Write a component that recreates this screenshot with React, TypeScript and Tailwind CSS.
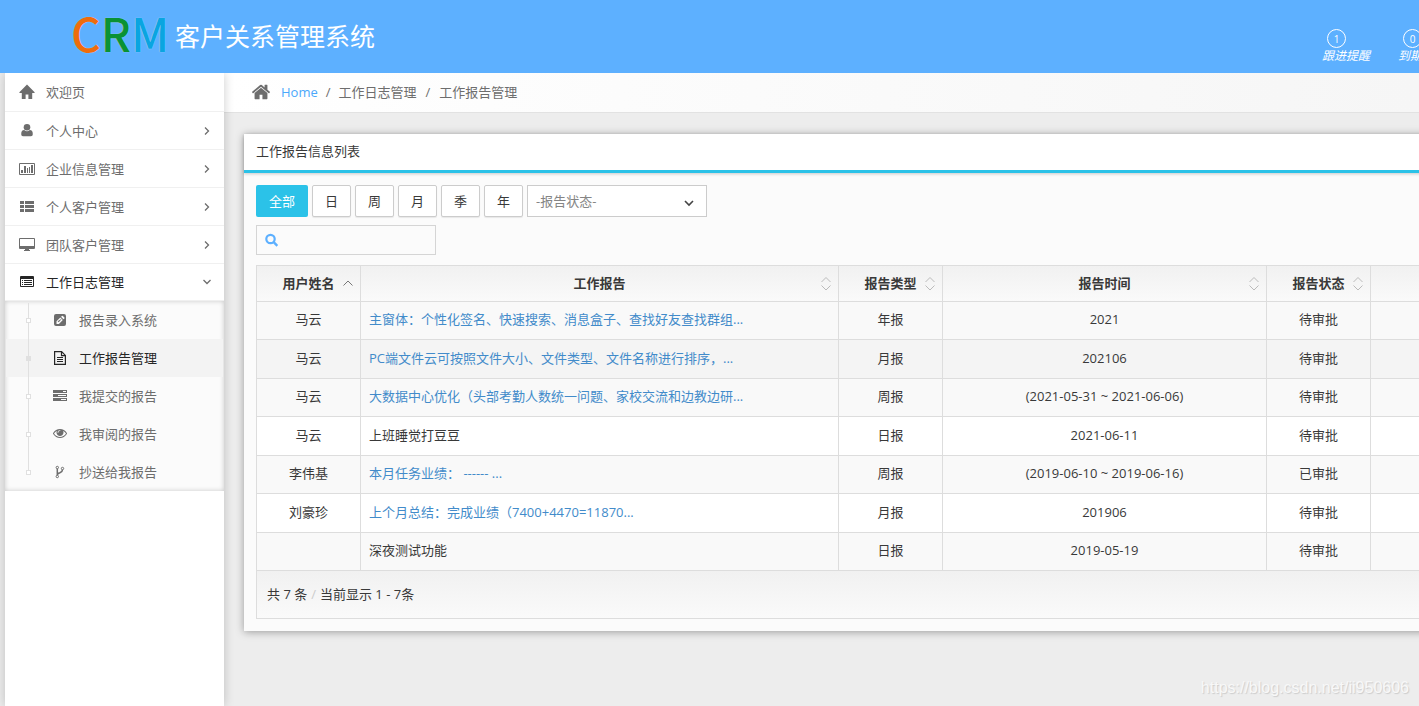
import type { ReactNode } from "react";

type IconProps = { className?: string };

function Glyph({ box, className, children }: { box: string; className?: string; children: ReactNode }) {
  return (
    <svg viewBox={box} fill="currentColor" aria-hidden="true" className={className}>
      {children}
    </svg>
  );
}

const HomeSolid = ({ className = "w-4 h-4" }: IconProps) => (
  <Glyph box="0 0 16 16" className={className}>
    <path d="M8 0.6 L15.6 8.2 V9 H13.2 V15 H9.4 V10.4 H6.6 V15 H2.8 V9 H0.4 V8.2 Z" />
  </Glyph>
);
const HomeRoof = ({ className = "w-5 h-5" }: IconProps) => (
  <Glyph box="0 0 1792 1792" className={className}>
    <path d="M1472 992v480q0 26-19 45t-45 19h-384v-384h-256v384h-384q-26 0-45-19t-19-45v-480q0-1 .5-3t.5-3l575-474 575 474q1 2 1 6zm223-69l-62 74q-8 9-21 11h-3q-13 0-21-7l-692-577-692 577q-12 8-24 7-13-2-21-11l-62-74q-8-10-7-23.5t11-21.5l719-599q32-26 76-26t76 26l244 204v-195q0-14 9-23t23-9h192q14 0 23 9t9 23v408l219 182q10 8 11 21.5t-7 23.5z" />
  </Glyph>
);
const UserIcon = () => (
  <Glyph box="0 0 16 16" className="w-4 h-4">
    <circle cx="8" cy="4.2" r="3.3" />
    <path d="M2.2 11.2 Q2.2 7 5.2 7 Q8 9.4 10.8 7 Q13.8 7 13.8 11.2 Q13.8 13.2 12 13.2 H4 Q2.2 13.2 2.2 11.2Z" />
  </Glyph>
);
const ChartIcon = () => (
  <Glyph box="0 0 16 16" className="w-4 h-4">
    <path fillRule="evenodd" d="M1 2h14a1 1 0 0 1 1 1v10a1 1 0 0 1-1 1H1a1 1 0 0 1-1-1V3a1 1 0 0 1 1-1zM1 3v10h14V3z" />
    <path d="M2 9h2v3H2zM5 5h2v7H5zM8 7h1v5H8zM10 6h1v6h-1zM12 4h2v8h-2z" />
  </Glyph>
);
const ListIcon = () => (
  <Glyph box="0 0 16 16" className="w-4 h-4">
    <path d="M1 2h4v3H1zM6 2h9v3H6zM1 6h4v3H1zM6 6h9v3H6zM1 10h4v3H1zM6 10h9v3H6z" />
  </Glyph>
);
const DesktopIcon = () => (
  <Glyph box="0 0 16 16" className="w-4 h-4">
    <path fillRule="evenodd" d="M1 1h14a1 1 0 0 1 1 1v9a1 1 0 0 1-1 1h-5v1h1v1H5v-1h1v-1H1a1 1 0 0 1-1-1V2a1 1 0 0 1 1-1zM1 2v7h14V2z" />
  </Glyph>
);
const ListAltIcon = () => (
  <Glyph box="0 0 16 16" className="w-4 h-4">
    <path fillRule="evenodd" d="M2 2h12a1 1 0 0 1 1 1v9a1 1 0 0 1-1 1H2a1 1 0 0 1-1-1V3a1 1 0 0 1 1-1zM2 5v7h12V5z" />
    <path d="M3 6h1v1H3zM5 6h8v1H5zM3 8h1v1H3zM5 8h8v1H5zM3 10h1v1H3zM5 10h8v1H5z" />
  </Glyph>
);
const PencilSquareIcon = () => (
  <Glyph box="0 0 14 14" className="w-[14px] h-[14px]">
    <path fillRule="evenodd" d="M3 1h8a2 2 0 0 1 2 2v8a2 2 0 0 1-2 2H3a2 2 0 0 1-2-2V3a2 2 0 0 1 2-2zM3.500 8.300V11h2.400l3.900-4-2.500-2.500zM8 3.800l2.500 2.500.9-.9q.4-.4 0-.9L9.900 2.900q-.4-.4-.9 0z" />
    <path d="M4.700 8.200l1 1 2.800-2.900-.4-.4z" />
  </Glyph>
);
const FileIcon = () => (
  <svg viewBox="0 0 14 14" fill="none" stroke="currentColor" strokeWidth="1.200" aria-hidden="true" className="w-[14px] h-[14px]">
    <path d="M1.600.600h7l3.800 3.800v9H1.600zM8.500.600v4h4M4 6.500h6M4 8.500h6M4 10.500h6" />
  </svg>
);
const TasksIcon = () => (
  <Glyph box="0 0 14 14" className="w-[14px] h-[14px]">
    <path fillRule="evenodd" d="M0 1h14v3H0zM10 2v1h3V2zM0 5h14v3H0zM5 6v1h8V6zM0 9h14v3H0zM8 10v1h5v-1z" />
  </Glyph>
);
const EyeIcon = () => (
  <Glyph box="0 128 1792 1792" className="w-[14px] h-[14px]">
    <path d="M1664 960q-152-236-381-353 61 104 61 225 0 185-131.500 316.500t-316.500 131.500-316.500-131.500-131.500-316.500q0-121 61-225-229 117-381 353 133 205 333.500 326.500t434.500 121.500 434.500-121.500 333.500-326.500zm-720-384q0-20-14-34t-34-14q-125 0-214.500 89.500t-89.500 214.500q0 20 14 34t34 14 34-14 14-34q0-86 61-147t147-61q20 0 34-14t14-34zm848 384q0 34-20 69-140 230-376.500 368.500t-499.500 138.500-499.500-139-376.500-368q-20-35-20-69t20-69q140-229 376.500-368t499.500-139 499.500 139 376.500 368q20 35 20 69z" />
  </Glyph>
);
const ForkIcon = () => (
  <svg viewBox="0 0 14 14" fill="none" stroke="currentColor" aria-hidden="true" className="w-[14px] h-[14px]">
    <path strokeWidth="1" d="M5.500 2.500a1.200 1.200 0 1 1-2.400 0a1.200 1.200 0 1 1 2.400 0M5.500 11.500a1.200 1.200 0 1 1-2.400 0a1.200 1.200 0 1 1 2.400 0M10.700 3.500a1.200 1.200 0 1 1-2.400 0a1.200 1.200 0 1 1 2.400 0" />
    <path strokeWidth="1.500" d="M4.300 3.700v6.600M9.500 4.700q0 2-2.600 3-2.600.8-2.600 2.600" />
  </svg>
);
const SearchIcon = () => (
  <svg viewBox="0 0 14 14" fill="none" stroke="currentColor" strokeWidth="2.200" aria-hidden="true" className="w-[14px] h-[14px]">
    <circle cx="5.500" cy="6" r="4.200" />
    <path d="M8.700 9.200l3.600 3.600" strokeWidth="2.400" />
  </svg>
);
const Chevron = ({ className = "" }: IconProps) => (
  <svg viewBox="0 0 10 10" fill="none" stroke="currentColor" strokeWidth="1.300" aria-hidden="true" className={className}>
    <path d="M3 1.500L6.500 5L3 8.500" />
  </svg>
);

const menu = [
  { label: "欢迎页", icon: <HomeSolid />, height: "h-[39px]" },
  { label: "个人中心", icon: <UserIcon />, height: "h-[38px]", expandable: true },
  { label: "企业信息管理", icon: <ChartIcon />, height: "h-[38px]", expandable: true },
  { label: "个人客户管理", icon: <ListIcon />, height: "h-[38px]", expandable: true },
  { label: "团队客户管理", icon: <DesktopIcon />, height: "h-[38px]", expandable: true },
  { label: "工作日志管理", icon: <ListAltIcon />, height: "h-[37px]", expandable: true, open: true },
];

const submenu = [
  { label: "报告录入系统", icon: <PencilSquareIcon /> },
  { label: "工作报告管理", icon: <FileIcon />, active: true },
  { label: "我提交的报告", icon: <TasksIcon /> },
  { label: "我审阅的报告", icon: <EyeIcon /> },
  { label: "抄送给我报告", icon: <ForkIcon /> },
];

const columns = [
  { label: "用户姓名", sort: "asc", width: "w-[104px]" },
  { label: "工作报告", sort: "both", width: "w-[478px]" },
  { label: "报告类型", sort: "both", width: "w-[104px]" },
  { label: "报告时间", sort: "both", width: "w-[324px]" },
  { label: "报告状态", sort: "both", width: "w-[104px]" },
  { label: "", sort: "", width: "" },
];

const rows = [
  { user: "马云", report: "主窗体：个性化签名、快速搜索、消息盒子、查找好友查找群组...", link: true, type: "年报", time: "2021", status: "待审批", bg: "bg-[#f9f9f9]" },
  { user: "马云", report: "PC端文件云可按照文件大小、文件类型、文件名称进行排序，...", link: true, type: "月报", time: "202106", status: "待审批", bg: "bg-[#f4f4f4]" },
  { user: "马云", report: "大数据中心优化（头部考勤人数统一问题、家校交流和边教边研...", link: true, type: "周报", time: "(2021-05-31 ~ 2021-06-06)", status: "待审批", bg: "bg-[#f9f9f9]" },
  { user: "马云", report: "上班睡觉打豆豆", link: false, type: "日报", time: "2021-06-11", status: "待审批", bg: "bg-white" },
  { user: "李伟基", report: "本月任务业绩： ------ ...", link: true, type: "周报", time: "(2019-06-10 ~ 2019-06-16)", status: "已审批", bg: "bg-[#f9f9f9]" },
  { user: "刘豪珍", report: "上个月总结：完成业绩（7400+4470=11870...", link: true, type: "月报", time: "201906", status: "待审批", bg: "bg-white" },
  { user: "", report: "深夜测试功能", link: false, type: "日报", time: "2019-05-19", status: "待审批", bg: "bg-[#f9f9f9]" },
];

function Header() {
  return (
    <header className="z-20 flex h-[73px] shrink-0 overflow-hidden bg-[#5db0ff] text-white">
      <div className="flex items-start pl-[71px]">
        <div className="flex font-['Noto_Sans_CJK_SC',sans-serif] text-[46px] leading-[64px] font-medium [text-shadow:0_0_1px_#ffffffaa]">
          <span className="text-[#ee6c0c]">C</span>
          <span className="text-[#0a9235]">R</span>
          <span className="text-[#0aa5e0]">M</span>
        </div>
        <h1 className="pl-1.5 text-[25px] leading-[72px] whitespace-nowrap">客户关系管理系统</h1>
      </div>
      <nav className="ml-auto flex w-[97px] shrink-0 pt-[29px]">
        {[
          ["1", "跟进提醒"],
          ["0", "到期提醒"],
        ].map(([count, label]) => (
          <a key={label} href="#" className="flex w-[76px] shrink-0 flex-col text-xs leading-4 italic">
            <span className="ml-[5px] flex size-[19px] items-center justify-center rounded-full border border-white text-[10px] leading-3 not-italic">{count}</span>
            <span className="whitespace-nowrap">{label}</span>
          </a>
        ))}
      </nav>
    </header>
  );
}

function Sidebar() {
  return (
    <aside className="z-10 ml-[5px] w-[219px] shrink-0 bg-white text-[#6d6d6d] shadow-[0_0_10px_rgba(0,0,0,0.2)]">
      <ul>
        {menu.map((item) => (
          <li key={item.label}>
            <a
              href="#"
              className={`flex items-center border-b border-[#f0f0f0] pr-3 pl-[14px] ${item.height} ${item.open ? "text-[#262626]" : ""}`}
            >
              {item.icon}
              <span className="ml-[11px] flex-1">{item.label}</span>
              {item.expandable && <Chevron className={`size-[10px] text-[#6d6d6d] ${item.open ? "rotate-90" : ""}`} />}
            </a>
          </li>
        ))}
      </ul>
      <ul className="relative bg-[#fbfbfb] shadow-[inset_0_0_5px_rgba(0,0,0,0.2)]">
        <li aria-hidden="true" className="absolute top-0.5 bottom-5 left-[23px] border-l border-[#e0e0e0]" />
        {submenu.map((item) => (
          <li key={item.label} className="px-px">
            <a
              href="#"
              className={`flex h-[38px] items-center pl-5 ${item.active ? "bg-[#f3f3f3] text-[#262626]" : ""}`}
            >
              <span className={`z-10 mr-[22px] size-[5px] border border-[#e0e0e0] ${item.active ? "bg-[#e0e0e0]" : "bg-white"}`} />
              {item.icon}
              <span className="ml-3">{item.label}</span>
            </a>
          </li>
        ))}
      </ul>
    </aside>
  );
}

function SortMark({ kind }: { kind: string }) {
  if (!kind) return null;
  return (
    <svg viewBox="0 0 10 16" fill="none" stroke={kind === "asc" ? "#777" : "#bbb"} aria-hidden="true" className="absolute top-[10px] right-[7px] h-4 w-[10px]">
      <path d={kind === "asc" ? "M.5 9.500L5 5L9.500 9.500" : "M.5 6L5 1.500L9.500 6M.5 9.500L5 14L9.500 9.500"} />
    </svg>
  );
}

function ReportTable() {
  return (
    <table className="w-full table-fixed border-separate border-spacing-0 border-t border-l border-[#ddd]">
      <thead>
        <tr>
          {columns.map((c, i) => (
            <th key={i} className={`relative h-9 border-r border-b border-[#ddd] bg-linear-to-b from-[#f1f1f1] to-[#fafafa] p-0 pb-px font-bold ${c.width}`}>
              {c.label}
              <SortMark kind={c.sort} />
            </th>
          ))}
        </tr>
      </thead>
      <tbody className="text-center [&_td]:border-r [&_td]:border-b [&_td]:border-[#ddd] [&_td]:p-0 [&_td]:pb-[3px]">
        {rows.map((r, i) => (
          <tr key={i} className={`h-[38px] even:h-[39px] ${r.bg}`}>
            <td>{r.user}</td>
            <td className="text-left">
              <div className="overflow-hidden pl-2 whitespace-nowrap">
                {r.link ? <a href="#" className="text-[#428bca]">{r.report}</a> : r.report}
              </div>
            </td>
            <td>{r.type}</td>
            <td>{r.time}</td>
            <td>{r.status}</td>
            <td />
          </tr>
        ))}
      </tbody>
    </table>
  );
}

export default function App() {
  return (
    <div className="relative flex min-h-screen flex-col overflow-hidden bg-[#ededed] font-['Open_Sans','Noto_Sans_CJK_SC',sans-serif] text-[13px] leading-5 text-[#393939]">
      <Header />
      <div className="flex flex-1">
        <Sidebar />
        <main className="min-w-0 flex-1">
          <nav className="flex h-10 items-center border-b border-[#e2e2e2] bg-linear-to-r from-white to-[#f6f6f6] pb-[2px] pl-[27px] text-[#6d6d6d]">
            <HomeRoof />
            <a href="#" className="ml-[10px] text-[#4ba8fb]">Home</a>
            <span className="mx-2">/</span>
            <span>工作日志管理</span>
            <span className="mx-[9px]">/</span>
            <span>工作报告管理</span>
          </nav>
          <section className="mt-[21px] mr-[-40px] ml-5 bg-[#fbfbfb] shadow-[0_1px_8px_rgba(0,0,0,0.35)]">
            <h2 className="h-[39px] border-b-3 border-[#2bc2e8] bg-white pl-3 leading-[35px] shadow-[0_1px_3px_rgba(0,0,0,0.2)]">工作报告信息列表</h2>
            <div className="p-3">
              <div className="flex gap-1">
                <button className="h-8 w-[52px] rounded-xs bg-[#2bc2e8] text-white">全部</button>
                {["日", "周", "月", "季", "年"].map((label) => (
                  <button key={label} className="h-8 w-[39px] rounded-xs border border-[#ccc] bg-white shadow-[0_1px_1px_rgba(0,0,0,0.08)]">
                    {label}
                  </button>
                ))}
                <div className="relative w-[180px]">
                  <select aria-label="报告状态" className="h-8 w-full appearance-none border border-[#ccc] bg-white pl-2 text-[#858585]">
                    <option>-报告状态-</option>
                  </select>
                  <svg viewBox="0 0 10 10" fill="none" stroke="#444" strokeWidth="1.600" aria-hidden="true" className="pointer-events-none absolute top-[13px] right-[13px] size-[10px]">
                    <path d="M1 3l4 4l4-4" />
                  </svg>
                </div>
              </div>
              <label className="mt-2 flex h-[30px] w-[180px] items-center border border-[#d5d5d5] pl-2 text-[#5db0ff]">
                <SearchIcon />
                <input type="text" aria-label="搜索" className="ml-1 min-w-0 flex-1 bg-transparent text-[#393939] outline-none" />
              </label>
              <div className="mt-[10px]">
                <ReportTable />
                <div className="flex h-12 items-center border-x border-b border-[#ddd] bg-linear-to-b from-[#f1f1f1] to-[#fafafa] pb-[2px] pl-[10px]">
                  <span>共 7 条</span>
                  <span className="mx-1 text-[#ccc]">/</span>
                  <span>当前显示 1 - 7条</span>
                </div>
              </div>
            </div>
          </section>
        </main>
      </div>
      <p className="absolute right-[10px] bottom-2 font-['Liberation_Sans',sans-serif] text-base leading-5 text-[#f8f8f8] [text-shadow:1px_1px_1px_#ccc]">
        https://blog.csdn.net/ii950606
      </p>
    </div>
  );
}
